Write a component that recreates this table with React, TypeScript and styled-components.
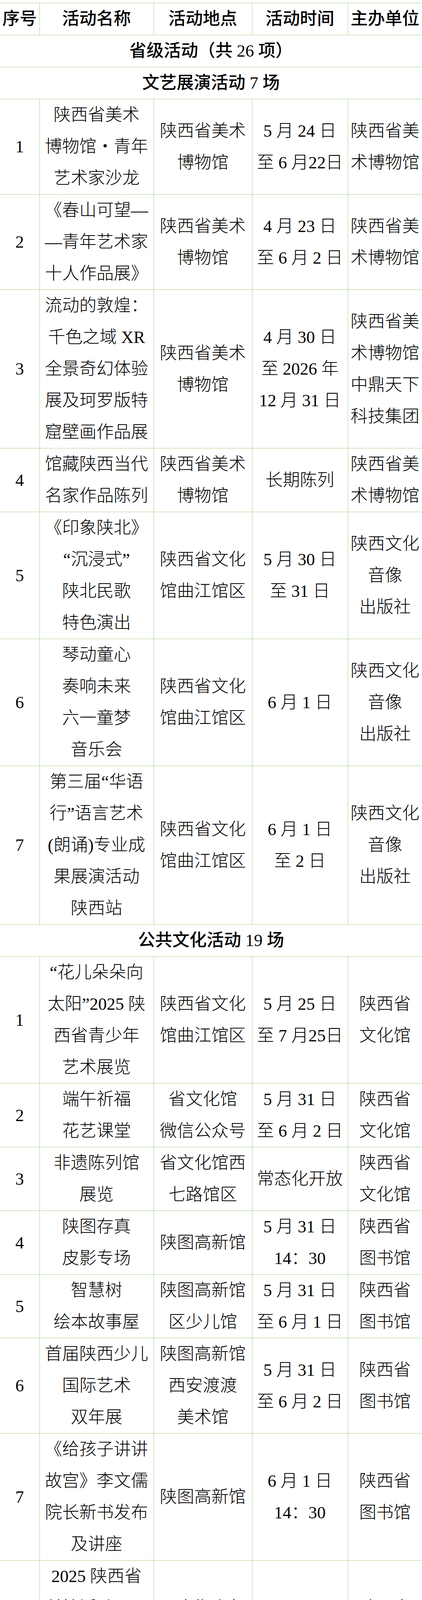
import React from "react";
import styled, { createGlobalStyle } from "styled-components";

const GlobalStyle = createGlobalStyle`
  html, body { margin: 0; padding: 0; background: #ffffff; }
`;

const LINE = "#a9d08e";

const Page = styled.div`
  width: 1080px;
  padding-top: 7px;
  background: #ffffff;
`;

const Table = styled.table`
  width: 1080px;
  border-collapse: collapse;
  table-layout: fixed;
  font-family: "Liberation Serif", "Noto Sans CJK SC", serif;
  font-size: 44px;
  line-height: 81px;
  color: #000;
`;

const Col = styled.col<{ $w: number }>`
  width: ${(p) => p.$w}px;
`;

const cellBase = `
  border: 1px solid ${LINE};
  padding: 0;
  text-align: center;
  vertical-align: middle;
  &:first-child { border-left: none; }
  &:last-child { border-right: none; }
`;

const HeadCell = styled.th`
  ${cellBase}
  font-weight: 500;
  height: 81px;
  white-space: nowrap;
`;

const SectionCell = styled.td`
  ${cellBase}
  font-weight: 500;
  height: 81px;
  white-space: nowrap;
`;

const Cell = styled.td`
  ${cellBase}
  font-weight: 300;
`;

const Line = styled.span`
  display: block;
  height: 81px;
  line-height: 81px;
  white-space: nowrap;
`;

type Item = {
  no: string;
  name: string[];
  place: string[];
  time: string[];
  org: string[];
};

const QU = ["陕西省文化", "馆曲江馆区"];
const YX = ["陕西文化", "音像", "出版社"];
const MS = ["陕西省美", "术博物馆"];
const TS = ["陕西省", "图书馆"];
const WH = ["陕西省", "文化馆"];
const MB = ["陕西省", "美术", "博物馆"];

const provincial: Item[] = [
  { no: "1", name: ["陕西省美术", "博物馆・青年", "艺术家沙龙"], place: ["陕西省美术", "博物馆"], time: ["5 月 24 日", "至 6 月22日"], org: MS },
  { no: "2", name: ["《春山可望—", "—青年艺术家", "十人作品展》"], place: ["陕西省美术", "博物馆"], time: ["4 月 23 日", "至 6 月 2 日"], org: MS },
  { no: "3", name: ["流动的敦煌：", "千色之域 XR", "全景奇幻体验", "展及珂罗版特", "窟壁画作品展"], place: ["陕西省美术", "博物馆"], time: ["4 月 30 日", "至 2026 年", "12 月 31 日"], org: ["陕西省美", "术博物馆", "中鼎天下", "科技集团"] },
  { no: "4", name: ["馆藏陕西当代", "名家作品陈列"], place: ["陕西省美术", "博物馆"], time: ["长期陈列"], org: MS },
  { no: "5", name: ["《印象陕北》", "“沉浸式”", "陕北民歌", "特色演出"], place: QU, time: ["5 月 30 日", "至 31 日"], org: YX },
  { no: "6", name: ["琴动童心", "奏响未来", "六一童梦", "音乐会"], place: QU, time: ["6 月 1 日"], org: YX },
  { no: "7", name: ["第三届“华语", "行”语言艺术", "(朗诵)专业成", "果展演活动", "陕西站"], place: QU, time: ["6 月 1 日", "至 2 日"], org: YX },
];

const publicItems: Item[] = [
  { no: "1", name: ["“花儿朵朵向", "太阳”2025 陕", "西省青少年", "艺术展览"], place: QU, time: ["5 月 25 日", "至 7 月25日"], org: WH },
  { no: "2", name: ["端午祈福", "花艺课堂"], place: ["省文化馆", "微信公众号"], time: ["5 月 31 日", "至 6 月 2 日"], org: WH },
  { no: "3", name: ["非遗陈列馆", "展览"], place: ["省文化馆西", "七路馆区"], time: ["常态化开放"], org: WH },
  { no: "4", name: ["陕图存真", "皮影专场"], place: ["陕图高新馆"], time: ["5 月 31 日", "14：30"], org: TS },
  { no: "5", name: ["智慧树", "绘本故事屋"], place: ["陕图高新馆", "区少儿馆"], time: ["5 月 31 日", "至 6 月 1 日"], org: TS },
  { no: "6", name: ["首届陕西少儿", "国际艺术", "双年展"], place: ["陕图高新馆", "西安渡渡", "美术馆"], time: ["5 月 31 日", "至 6 月 2 日"], org: TS },
  { no: "7", name: ["《给孩子讲讲", "故宫》李文儒", "院长新书发布", "及讲座"], place: ["陕图高新馆"], time: ["6 月 1 日", "14：30"], org: TS },
  { no: "8", name: ["2025 陕西省", "科技活动周：", "了不起的古代", "科技—中医药"], place: ["西大街少年", "儿童馆"], time: ["5 月 31 日", "14：30"], org: TS },
  { no: "9", name: ["陕图讲坛：唐", "人朝事诗歌与", "唐代政治生态"], place: ["陕西省图书", "馆报告厅"], time: ["5 月 31 日", "14：30"], org: TS },
  { no: "10", name: ["“银龄阅读", "乐学乐行”老", "年人专题", "书架展"], place: ["陕西省图书", "馆"], time: ["长期"], org: TS },
  { no: "11", name: ["我是未来创想", "家系列公教活", "动之布上有爱", "童绘世界"], place: ["陕西省", "美术博物馆"], time: ["5 月 31 日", "9：30"], org: MB },
  { no: "12", name: ["志愿者讲解"], place: ["陕西省", "美术博物馆"], time: ["5 月 31 日", "至 6 月 2 日", "15：00"], org: MB },
  { no: "13", name: ["“花儿朵朵向", "太阳”青少年", "艺术展览"], place: QU, time: ["5 月 25 日", "至 7 月25日"], org: YX },
  { no: "14", name: ["花艺团扇非遗", "体验课程"], place: QU, time: ["5 月 31 日", "至 6 月 2 日"], org: YX },
  { no: "15", name: ["油纸伞非遗", "体验课程"], place: QU, time: ["5 月 31 日", "至 6 月 2 日"], org: YX },
  { no: "16", name: ["漆扇非遗", "体验课程"], place: QU, time: ["5 月 31 日", "至 6 月 2 日"], org: YX },
  { no: "17", name: ["烧箔画非遗", "体验课程"], place: QU, time: ["5 月 31 日", "至 6 月 2 日"], org: YX },
  { no: "18", name: ["非遗香囊", "非遗体验课程"], place: QU, time: ["5 月 31 日", "至 6 月 2 日"], org: YX },
  { no: "19", name: ["儿童科普读书", "讲座–未来世", "界的能源之道"], place: QU, time: ["6 月 1 日"], org: YX },
];

const Lines = ({ items }: { items: string[] }) => (
  <>
    {items.map((t, i) => (
      <Line key={i}>{t}</Line>
    ))}
  </>
);

const Row = ({ item }: { item: Item }) => (
  <tr>
    <Cell>
      <Line>{item.no}</Line>
    </Cell>
    <Cell>
      <Lines items={item.name} />
    </Cell>
    <Cell>
      <Lines items={item.place} />
    </Cell>
    <Cell>
      <Lines items={item.time} />
    </Cell>
    <Cell>
      <Lines items={item.org} />
    </Cell>
  </tr>
);

const Section = ({ title }: { title: string }) => (
  <tr>
    <SectionCell colSpan={5}>{title}</SectionCell>
  </tr>
);

export default function App() {
  return (
    <>
      <GlobalStyle />
      <Page>
        <Table>
          <colgroup>
            <Col $w={101} />
            <Col $w={292} />
            <Col $w={252} />
            <Col $w={245} />
            <Col $w={190} />
          </colgroup>
          <thead>
            <tr>
              <HeadCell>序号</HeadCell>
              <HeadCell>活动名称</HeadCell>
              <HeadCell>活动地点</HeadCell>
              <HeadCell>活动时间</HeadCell>
              <HeadCell>主办单位</HeadCell>
            </tr>
          </thead>
          <tbody>
            <Section title="省级活动（共 26 项）" />
            <Section title="文艺展演活动 7 场" />
            {provincial.map((it) => (
              <Row key={"p" + it.no} item={it} />
            ))}
            <Section title="公共文化活动 19 场" />
            {publicItems.map((it) => (
              <Row key={"g" + it.no} item={it} />
            ))}
          </tbody>
        </Table>
      </Page>
    </>
  );
}
